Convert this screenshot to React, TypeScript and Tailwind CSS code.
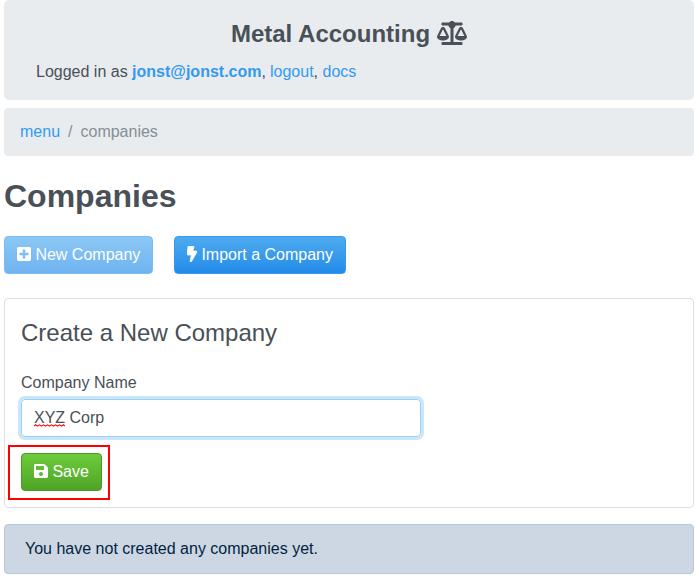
import { FaBalanceScale, FaBolt, FaPlusSquare, FaSave } from "react-icons/fa";

export default function App() {
  return (
    <div className="h-[579px] overflow-hidden bg-white pr-[5px] pl-1 font-['Liberation_Sans',Arial,sans-serif] text-base leading-6 text-[#495057]">
      <header className="h-[100px] rounded-[5px] bg-[#e9ecef] px-8 pt-5">
        <h1 className="flex h-7 items-center justify-center text-2xl font-bold">
          Metal Accounting
          <FaBalanceScale className="mb-0.5 ml-[7px] h-6 w-[30px]" strokeWidth="0" />
        </h1>
        <p className="mt-3">
          Logged in as{" "}
          <a href="#" className="font-bold text-[#339af0]">jonst@jonst.com</a>,{" "}
          <a href="#" className="-ml-[0.4px] text-[#339af0]">logout</a>,{" "}
          <a href="#" className="text-[#339af0]">docs</a>
        </p>
      </header>

      <nav className="mt-2 flex h-12 items-center gap-2 rounded bg-[#e9ecef] px-4">
        <a href="#" className="text-[#339af0]">menu</a>
        <span className="text-[#868e96]">/</span>
        <span className="text-[#868e96]">companies</span>
      </nav>

      <h2 className="mt-5 text-[32px] leading-10 font-bold">Companies</h2>

      <div className="mt-5 flex gap-[21px]">
        <button className="flex h-[38px] w-[149px] items-center rounded border border-[#339af0] bg-linear-to-b from-[#4dabf0] to-[#228be9] pl-3 whitespace-nowrap text-white opacity-65">
          <FaPlusSquare className="mr-[4.4px] mb-0.5 h-4 w-[14px] shrink-0" />
          New Company
        </button>
        <button className="flex h-[38px] w-[172px] items-center rounded border border-[#339af0] bg-linear-to-b from-[#4dabf0] to-[#228be9] pl-3 whitespace-nowrap text-white">
          <FaBolt className="mr-[4.4px] mb-0.5 h-4 w-[10px] shrink-0" stroke="currentColor" strokeWidth="24" />
          Import a Company
        </button>
      </div>

      <section className="mt-6 h-[210px] rounded border border-[#dfdfdf] px-4 pt-[19px]">
        <h3 className="text-2xl leading-[29px]">Create a New Company</h3>
        <label className="mt-6 block" htmlFor="company">Company Name</label>
        <div id="company" className="mt-1 flex h-[38px] w-[400px] items-center rounded border border-[#99d0f6] px-3 shadow-[0_0_0_3px_#cae6fc]">
          <span className="relative">
            XYZ
            <svg className="absolute top-[18px] left-0 h-[3px] w-[31px]" viewBox="0 0 31 3" fill="none">
              <path d="M0 2.2 L1.5 .8 L3.5 2.2 L5.5 .8 L7.5 2.2 L9.5 .8 L11.5 2.2 L13.5 .8 L15.5 2.2 L17.5 .8 L19.5 2.2 L21.5 .8 L23.5 2.2 L25.5 .8 L27.5 2.2 L29.5 .8 L31 2.2" stroke="#ff0000" strokeWidth="1.1" />
            </svg>
          </span>
          <span className="ml-[4.4px]">Corp</span>
        </div>
        <div className="mt-2 -ml-[13px] h-[55px] w-[102px] border-2 border-[#ff0000] pt-[6px] pl-[11px]">
          <button className="flex h-[38px] w-[81px] items-center rounded border border-[#4a9a24] bg-linear-to-b from-[#6ccc3b] to-[#4fa426] pl-3 whitespace-nowrap text-white">
            <FaSave className="mr-[4.4px] mb-0.5 h-4 w-[14px] shrink-0" />
            Save
          </button>
        </div>
      </section>

      <div className="mt-4 flex h-[50px] items-center rounded border border-[#b8c8dc] bg-[#cdd7e3] px-5 text-[#021f3f]">
        You have not created any companies yet.
      </div>
    </div>
  );
}
